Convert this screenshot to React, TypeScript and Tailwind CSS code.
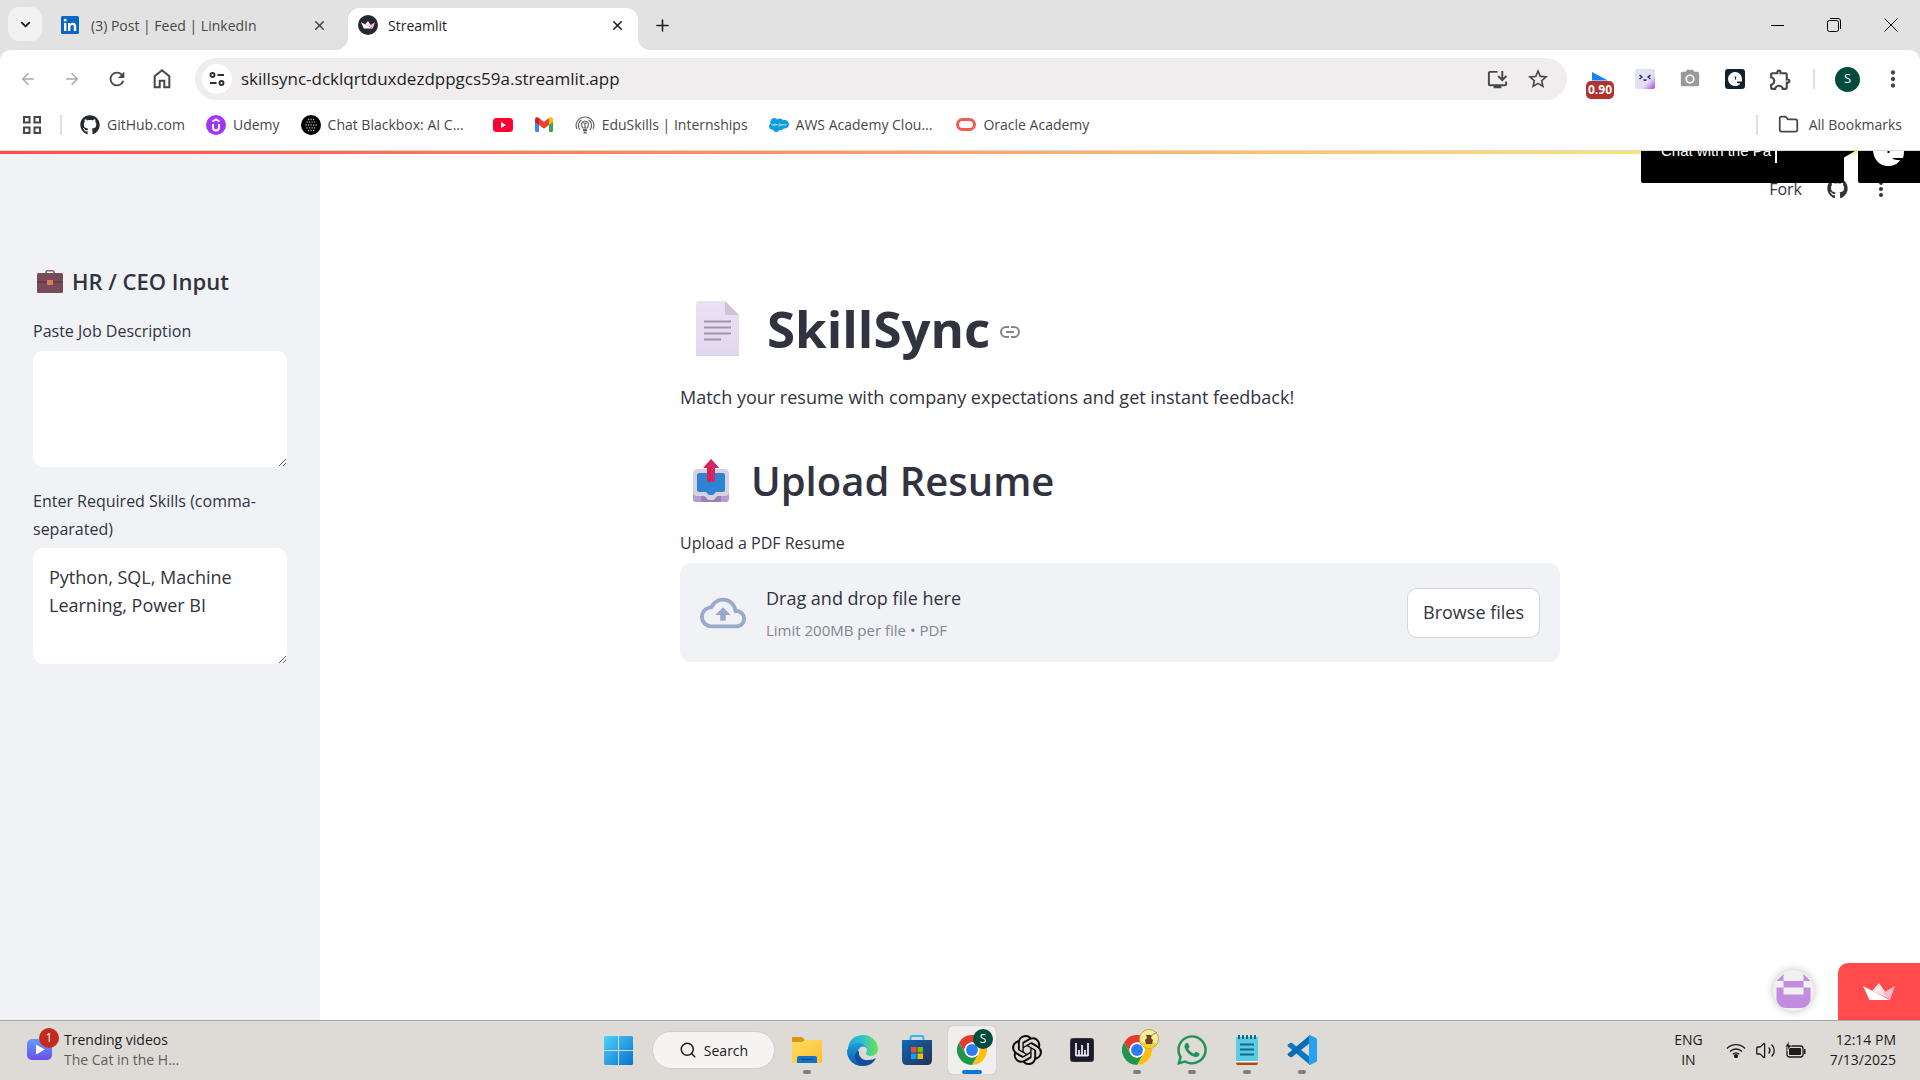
import type { ReactNode } from "react";
import { FaGithub, FaWhatsapp, FaSalesforce } from "react-icons/fa";
import { MdOutlineInstallDesktop, MdOutlineExtension, MdOutlineCloudUpload, MdRefresh, MdStarBorder, MdMoreVert, MdCameraAlt } from "react-icons/md";
import { ArrowLeft, ArrowRight, Plus, X, ChevronDown, Folder, Search, Volume2 } from "lucide-react";

function Crown({ className }: { className: string }) {
  return (
    <svg viewBox="0 0 32 17" className={className}>
      <path d="M0 3 27 17H6.500Z" fill="#fff" />
      <path d="M16 0 27 16 9 8Z" fill="#ffe0e6" />
      <path d="M32 3 27 17 20 10Z" fill="#ffb8c6" />
    </svg>
  );
}

function ChromeLogo({ className }: { className: string }) {
  return (
    <svg viewBox="0 0 48 48" className={className}>
      <circle cx="24" cy="24" r="24" fill="#fff" />
      <path d="M24 12h20.800A24 24 0 0 0 3.200 12l10.400 18A12 12 0 0 1 24 12Z" fill="#e33b2e" />
      <path d="M34.400 30 24 48A24 24 0 0 0 44.800 12H24a12 12 0 0 1 10.400 18Z" fill="#fdc00f" />
      <path d="M13.600 30 3.200 12A24 24 0 0 0 24 48l10.400-18a12 12 0 0 1-20.800 0Z" fill="#21964a" />
      <circle cx="24" cy="24" r="12" fill="#fff" />
      <circle cx="24" cy="24" r="9.500" fill="#2f7bf2" />
    </svg>
  );
}

function OpenAiLogo() {
  return (
    <svg viewBox="0 0 24 24" className="size-[30px]" fill="#0c0c0c">
      <path d="M22.2819 9.8211a5.9847 5.9847 0 0 0-.5157-4.9108 6.0462 6.0462 0 0 0-6.5098-2.9A6.0651 6.0651 0 0 0 4.9807 4.1818a5.9847 5.9847 0 0 0-3.9977 2.9 6.0462 6.0462 0 0 0 .7427 7.0966 5.98 5.98 0 0 0 .511 4.9107 6.051 6.051 0 0 0 6.5146 2.9001A5.9847 5.9847 0 0 0 13.2599 24a6.0557 6.0557 0 0 0 5.7718-4.2058 5.9894 5.9894 0 0 0 3.9977-2.9001 6.0557 6.0557 0 0 0-.7475-7.073zm-9.022 12.6081a4.4755 4.4755 0 0 1-2.8764-1.0408l.1419-.0804 4.7783-2.7582a.7948.7948 0 0 0 .3927-.6813v-6.7369l2.02 1.1686a.071.071 0 0 1 .038.052v5.5826a4.504 4.504 0 0 1-4.4945 4.4944zm-9.6607-4.1254a4.4708 4.4708 0 0 1-.5346-3.0137l.142.0852 4.783 2.7582a.7712.7712 0 0 0 .7806 0l5.8428-3.3685v2.3324a.0804.0804 0 0 1-.0332.0615L9.74 19.9502a4.4992 4.4992 0 0 1-6.1408-1.6464zM2.3408 7.8956a4.485 4.485 0 0 1 2.3655-1.9728V11.6a.7664.7664 0 0 0 .3879.6765l5.8144 3.3543-2.0201 1.1685a.0757.0757 0 0 1-.071 0l-4.8303-2.7865A4.504 4.504 0 0 1 2.3408 7.872zm16.5963 3.8558L13.1038 8.364 15.1192 7.2a.0757.0757 0 0 1 .071 0l4.8303 2.7913a4.4944 4.4944 0 0 1-.6765 8.1042v-5.6772a.79.79 0 0 0-.407-.667zm2.0107-3.0231l-.142-.0852-4.7735-2.7818a.7759.7759 0 0 0-.7854 0L9.409 9.2297V6.8974a.0662.0662 0 0 1 .0284-.0615l4.8303-2.7866a4.4992 4.4992 0 0 1 6.6802 4.66zM8.3065 12.863l-2.02-1.1638a.0804.0804 0 0 1-.038-.0567V6.0742a4.4992 4.4992 0 0 1 7.3757-3.4537l-.142.0805L8.704 5.459a.7948.7948 0 0 0-.3927.6813zm1.0976-2.3654l2.602-1.4998 2.6069 1.4998v2.9994l-2.5974 1.4997-2.6067-1.4997Z" />
    </svg>
  );
}

function TabStrip() {
  return (
    <header className="flex h-[50px] items-end bg-[#e2e2e2] text-[#1f1f1f]">
      <button aria-label="Search tabs" className="mb-[9px] ml-2 flex size-[34px] items-center justify-center rounded-[11px] bg-[#f2f2f2]">
        <ChevronDown className="size-[15px]" strokeWidth={3} />
      </button>
      <div className="flex h-[42px] w-[306px] items-center pb-2 pl-[19px] pr-[21px] text-[#474747]">
        <svg viewBox="0 0 18 18" className="size-[18px]">
          <rect width="18" height="18" rx="1.500" fill="#0a66c2" />
          <path d="M3 7h2.400v8H3zM7 7h2.300v1.200C9.800 7.300 10.700 6.800 12 6.800c2.300 0 3.200 1.400 3.200 3.800V15h-2.400v-3.900c0-1.300-.300-2.200-1.500-2.200-1.300 0-1.900.900-1.900 2.200V15H7z" fill="#fff" />
          <circle cx="4.200" cy="4.200" r="1.400" fill="#fff" />
        </svg>
        <span className="ml-3 flex-1 whitespace-nowrap text-[14px]">(3) Post | Feed | LinkedIn</span>
        <button aria-label="Close LinkedIn tab"><X className="size-[15px]" strokeWidth={2.5} /></button>
      </div>
      <div className="relative flex h-[42px] w-[290px] items-center rounded-t-xl bg-white pb-2 pl-[10px] pr-[13px]">
        <span className="absolute -left-3 bottom-0 size-3 bg-[radial-gradient(circle_at_0_0,transparent_12px,white_12px)]" />
        <span className="absolute -right-3 bottom-0 size-3 bg-[radial-gradient(circle_at_100%_0,transparent_12px,white_12px)]" />
        <span className="flex size-5 items-center justify-center rounded-full bg-[#262730]">
          <Crown className="w-[14px]" />
        </span>
        <span className="ml-[10px] flex-1 text-[14px]">Streamlit</span>
        <button aria-label="Close Streamlit tab"><X className="size-[15px]" strokeWidth={2.5} /></button>
      </div>
      <button aria-label="New tab" className="mb-[15px] ml-[15px]"><Plus className="size-[19px]" strokeWidth={2} /></button>
      <div className="ml-auto flex h-full items-center pr-[22px]">
        <button aria-label="Minimize" className="h-px w-[13px] bg-black" />
        <button aria-label="Restore" className="ml-[43px]">
          <svg viewBox="0 0 14 14" className="size-[14px]" fill="none" stroke="#000">
            <rect x=".5" y="2.500" width="11" height="11" rx="2" />
            <path d="M3 .5h8a2.500 2.500 0 0 1 2.500 2.500v8" />
          </svg>
        </button>
        <button aria-label="Close window" className="ml-[43px]">
          <svg viewBox="0 0 14 14" className="size-[14px]" stroke="#000"><path d="m.5.5 13 13m0-13-13 13" /></svg>
        </button>
      </div>
    </header>
  );
}

function Toolbar() {
  return (
    <div className="bg-[#e2e2e2]">
      <div className="flex h-[58px] items-center rounded-t-[10px] bg-white pl-[19px] pr-[14px] text-[#474747]">
        <button aria-label="Back" className="text-[#a9a9a9]"><ArrowLeft className="size-[18px]" /></button>
        <button aria-label="Forward" className="ml-[26px] text-[#a9a9a9]"><ArrowRight className="size-[18px]" /></button>
        <button aria-label="Reload" className="ml-[25px]"><MdRefresh className="size-[22px]" /></button>
        <button aria-label="Home" className="ml-[23px]">
          <svg viewBox="0 0 24 24" className="size-[22px]" fill="none" stroke="currentColor" strokeWidth="2.200"><path d="M4 21V9l8-6.500L20 9v12h-5.500v-7h-5v7z" /></svg>
        </button>
        <div className="ml-[22px] flex h-[42px] flex-1 items-center rounded-full bg-[#efedee] pl-[7px] pr-[17px]">
          <button aria-label="Site information" className="flex size-[30px] items-center justify-center rounded-full bg-white">
            <svg viewBox="0 0 16 16" className="size-[16px]" fill="none" stroke="#303030" strokeWidth="1.900">
              <circle cx="3.500" cy="4" r="2" /><path d="M8.500 4H15M1 12h6.500" /><circle cx="12.500" cy="12" r="2" />
            </svg>
          </button>
          <input aria-label="Address" defaultValue="skillsync-dcklqrtduxdezdppgcs59a.streamlit.app" className="ml-[9px] flex-1 bg-transparent text-[17px] text-[#1f1f1f] outline-none" />
          <button aria-label="Install app"><MdOutlineInstallDesktop className="size-[23px]" /></button>
          <button aria-label="Bookmark this tab" className="ml-[17px]"><MdStarBorder className="size-[24px]" /></button>
        </div>
        <button aria-label="Speed extension" className="ml-[19px] flex flex-col items-center pt-[12px]">
          <svg viewBox="0 0 18 9" className="h-[9px] w-[18px]"><path d="M1 0 17 8.500H1z" fill="#0a84ff" /></svg>
          <span className="flex h-[18px] w-[28px] items-center justify-center rounded-[5px] bg-[#b3302f] text-[12px] font-bold text-white">0.90</span>
        </button>
        <button aria-label="Kawaii extension" className="ml-[21px] flex size-[20px] items-center justify-center rounded-[2px] bg-[linear-gradient(135deg,#dfe6f5_0%,#e5dcf5_65%,#a246dd_100%)]">
          <svg viewBox="0 0 20 20" className="size-[20px]" fill="none" stroke="#241b45" strokeWidth="1.300"><path d="m4.500 6 2.500 2-2.500 2M15.500 6 13 8l2.500 2M8.500 10.500q1.500 1.500 3 0" /></svg>
        </button>
        <button aria-label="Screenshot extension" className="ml-[24px] text-[#9a9a9a]"><MdCameraAlt className="size-[22px]" /></button>
        <button aria-label="Chat extension" className="ml-[24px] flex size-[20px] items-center justify-center rounded-[3px] bg-[#10222e]">
          <svg viewBox="0 0 20 20" className="size-[20px]"><path d="M10 3a7 7 0 1 0 5.500 11.400L12 14v-1.500h5V10a7 7 0 0 0-7-7Z" fill="#fff" /><path d="M10.500 7.500v3" stroke="#10222e" strokeWidth="1.300" /></svg>
        </button>
        <button aria-label="Extensions" className="ml-[23px]"><MdOutlineExtension className="size-[25px]" /></button>
        <span className="ml-[20px] h-[20px] w-[2px] bg-[#e0dfe0]" />
        <button aria-label="Profile" className="ml-[20px] flex size-[25px] items-center justify-center rounded-full bg-[#004d40] text-[13px] text-white">S</button>
        <button aria-label="Browser menu" className="ml-[20px]"><MdMoreVert className="size-[26px]" /></button>
      </div>
    </div>
  );
}

function Bookmark({ label, name, children }: { label?: string; name: string; children: ReactNode }) {
  return (
    <a href="#" aria-label={name} className="flex items-center gap-[7px] whitespace-nowrap">
      <span className="flex size-5 items-center justify-center">{children}</span>
      {label}
    </a>
  );
}

function BookmarksBar() {
  return (
    <nav className="flex h-[43px] items-center border-b border-[#d9d9d9] bg-white pb-[9px] pl-[23px] pr-[18px] text-[14px] text-[#474747]">
      <button aria-label="Apps">
        <svg viewBox="0 0 18 18" className="size-[18px]" fill="none" stroke="#474747" strokeWidth="2"><path d="M1 1h5.500v5.500H1zM11.500 1H17v5.500h-5.500zM1 11.500h5.500V17H1zM11.500 11.500H17V17h-5.500z" /></svg>
      </button>
      <span className="ml-[19px] mr-[18px] h-[20px] w-[2px] bg-[#e0dfe0]" />
      <div className="flex items-center gap-[21px]">
        <Bookmark name="GitHub" label="GitHub.com"><FaGithub className="size-5 text-[#24292f]" /></Bookmark>
        <Bookmark name="Udemy" label="Udemy">
          <svg viewBox="0 0 20 20" className="size-5" fill="none" stroke="#fff" strokeWidth="2"><circle cx="10" cy="10" r="10" fill="#a435f0" stroke="none" /><path d="m6.500 6.500 3.500-2 3.500 2M7 9v3.500a3 3 0 0 0 6 0V9" /></svg>
        </Bookmark>
        <Bookmark name="Blackbox" label="Chat Blackbox: AI C...">
          <svg viewBox="0 0 20 20" className="size-5"><circle cx="10" cy="10" r="10" fill="#000" /><path d="M7 4.500h7M5.500 7.200h9.500M4.500 10h11.500M5.500 12.800h9.500M7 15.500h7" stroke="#bbb" strokeWidth="1.300" strokeDasharray="1.200 1.300" /></svg>
        </Bookmark>
        <span className="ml-[8px]"><Bookmark name="YouTube">
          <svg viewBox="0 0 20 14" className="h-[14px] w-5"><rect width="20" height="14" rx="3.500" fill="#f03" /><path d="M8 4v6l5-3z" fill="#fff" /></svg>
        </Bookmark></span>
        <Bookmark name="Gmail">
          <svg viewBox="0 0 20 15" className="h-[15px] w-5">
            <path d="M1 3v10.500c0 .8.500 1.500 1.400 1.500H5V6z" fill="#4285f4" />
            <path d="M19 3v10.500c0 .8-.500 1.500-1.400 1.500H15V6z" fill="#34a853" />
            <path d="M15 2.500V8l4-3V2.500C19 .5 16.800-.3 15 1z" fill="#fbbc04" />
            <path d="M1 2.500V5l4 3V2.500L5 1C3.200-.3 1 .5 1 2.500Z" fill="#c5221f" />
            <path d="M5 8V1l5 3.800L15 1v7l-5 3.800z" fill="#ea4335" />
          </svg>
        </Bookmark>
        <Bookmark name="EduSkills" label="EduSkills | Internships">
          <svg viewBox="0 0 20 20" className="size-5" fill="none" stroke="#666" strokeWidth="1.200"><path d="M2 14C-1 8 4 2 10 2s11 6 8 12M5 15c-3-4-1-9 1.500-10M15 15c3-4 1-9-1.500-10M8 13c-3-3-1-7 2-7s5 4 2 7zM8 8h4M10 8v5" /><path d="M8 15h4M8.500 17.500h3" strokeWidth="2" /></svg>
        </Bookmark>
        <Bookmark name="AWS Academy" label="AWS Academy Clou..."><FaSalesforce className="size-5 text-[#0d9ddb]" /></Bookmark>
        <span className="ml-[3px]"><Bookmark name="Oracle Academy" label="Oracle Academy">
          <span className="h-[13px] w-5 rounded-full border-[3px] border-[#ee5d4a]" />
        </Bookmark></span>
      </div>
      <span className="ml-auto mr-[20px] h-[20px] w-[2px] bg-[#e0dfe0]" />
      <a href="#" className="flex items-center gap-[10px]"><Folder className="size-[21px]" strokeWidth={2} />All Bookmarks</a>
    </nav>
  );
}

function Sidebar() {
  return (
    <aside className="w-[320px] shrink-0 bg-[#f0f2f6] px-[33px] pt-[114px]">
      <h2 className="flex items-center text-[22px] font-semibold leading-[32px]">
        <svg viewBox="0 0 26 24" className="mr-[9px] ml-[4px] h-[24px] w-[26px] shrink-0">
          <path d="M9 5V3.500C9 2.500 9.800 1.800 11 1.800h4c1.200 0 2 .7 2 1.700V5" fill="none" stroke="#8c6068" strokeWidth="1.600" />
          <rect y="4" width="26" height="20" rx="1.500" fill="#794a58" />
          <path d="M0 13h26" stroke="#5d3350" strokeWidth="1.200" />
          <rect x="10" y="11" width="6" height="5" fill="#d67d55" />
        </svg>
        HR / CEO Input
      </h2>
      <label htmlFor="job" className="mt-[20px] block text-[16px] leading-[28px]">Paste Job Description</label>
      <textarea id="job" className="mt-[6px] block h-[116px] w-full rounded-[10px] bg-white px-4 py-[15px] text-[18px] leading-[28px] outline-none" />
      <label htmlFor="skills" className="mt-[20px] block text-[16px] leading-[28px]">Enter Required Skills (comma-separated)</label>
      <textarea id="skills" defaultValue="Python, SQL, Machine Learning, Power BI" className="mt-[5px] block h-[116px] w-full rounded-[10px] bg-white px-4 py-[15px] text-[18px] leading-[28px] outline-none" />
    </aside>
  );
}

function ChatOverlay() {
  return (
    <div className="absolute right-0 top-0 z-20 flex h-[32px] items-start">
      <div className="relative h-[32px] w-[203px] overflow-hidden rounded-b-[2px] bg-black">
        <span className="absolute -top-[11px] left-[20px] flex items-center whitespace-nowrap font-['Liberation_Sans'] text-[15px] leading-[22px] text-white">Chat with the Pa</span>
        <span className="absolute left-[134px] top-0 h-[12px] w-[2px] bg-white" />
      </div>
      <svg viewBox="0 0 14 7" className="h-[7px] w-[14px]"><path d="M0 0h11L0 6.500z" fill="#000" /></svg>
      <div className="h-[32px] w-[62px] overflow-hidden rounded-bl-[2px] bg-black">
        <svg viewBox="0 0 62 32" className="h-[32px] w-[62px]">
          <path d="M15 0c1 9 7 15 15 15 5 0 10-2 12-6-3 0-6 0-8-2h11q1-3 1-7z" fill="#fff" />
          <path d="M30.500 0v2" stroke="#000" strokeWidth="2" />
        </svg>
      </div>
    </div>
  );
}

function DocumentEmoji() {
  return (
    <svg viewBox="0 0 43 55" className="ml-[16px] mr-[28px] h-[55px] w-[43px]">
      <defs>
        <linearGradient id="paper" x1="0" y1="0" x2="0" y2="1"><stop stopColor="#eae1f3" /><stop offset="1" stopColor="#e2d8ee" /></linearGradient>
      </defs>
      <path d="M2 0h27l14 14v39c0 1-1 2-2 2H2c-1 0-2-1-2-2V2C0 1 1 0 2 0Z" fill="url(#paper)" />
      <path d="M29 0v12c0 1 1 2 2 2h12z" fill="#cdc4d4" />
      <path d="M0 53c0 1 1 2 2 2h39c1 0 2-1 2-2" fill="none" stroke="#cdbfe0" />
      <path d="M8 20.500h27M8 26.500h27M8 32.500h27M8 38.500h17" stroke="#9e95a9" strokeWidth="2" />
    </svg>
  );
}

function OutboxEmoji() {
  return (
    <svg viewBox="0 0 36 44" className="ml-[13px] mr-[22px] h-[44px] w-[36px]">
      <path d="M0 24h36v16c0 2-1 3-3 3H3c-2 0-3-1-3-3z" fill="#b79bd0" />
      <path d="M8 36h20v7H8z" fill="#9a7fb8" />
      <path d="M4 10h28c2 0 4 2 4 4v19c0 3-2 4-4 4h-7c-2 0-3 4-5 4h-4c-2 0-3-4-5-4H4c-2 0-4-1-4-4V14c0-2 2-4 4-4Z" fill="#d8d2e0" />
      <path d="M6 14h24c1 0 2 1 2 2v15c0 1-1 2-2 2h-7l-3 3h-4l-3-3H6c-1 0-2-1-2-2V16c0-1 1-2 2-2Z" fill="#2f83d3" />
      <path d="m18 0 8 9h-4v12c0 1-1 2-2 2h-4c-1 0-2-1-2-2V9h-4z" fill="#d6244f" />
      <path d="m18 0 8 9h-4v12c0 1-1 2-2 2h-2z" fill="#c92a72" />
    </svg>
  );
}

function AppPage() {
  return (
    <div className="flex flex-1 text-[#31333f]">
      <Sidebar />
      <main className="relative flex flex-1 flex-col bg-white">
        <div className="flex h-[75px] items-center justify-end pr-[27px] text-[16px]">
          <button>Fork</button>
          <a href="#" aria-label="Source repository" className="ml-[25px]"><FaGithub className="size-[21px]" /></a>
          <button aria-label="App menu" className="ml-[21px]"><MdMoreVert className="size-[24px]" /></button>
        </div>
        <div className="mx-auto w-full max-w-[880px] pt-[69px]">
          <h1 className="flex h-[66px] items-center text-[51px] font-bold leading-[66px]">
            <DocumentEmoji />
            SkillSync
            <a href="#" aria-label="Link to heading" className="ml-[10px] mt-[8px] text-[#83858c]">
              <svg viewBox="0 0 20 12" className="h-[12px] w-[20px]" fill="none" stroke="currentColor" strokeWidth="2"><path d="M9 1H6a5 5 0 0 0 0 10h3M11 1h3a5 5 0 0 1 0 10h-3M6 6h8" /></svg>
            </a>
          </h1>
          <p className="mt-[20px] text-[18px] leading-[32px]">Match your resume with company expectations and get instant feedback!</p>
          <h2 className="mt-[41px] flex h-[54px] items-center text-[40px] font-semibold leading-[54px]"><OutboxEmoji />Upload Resume</h2>
          <label htmlFor="resume" className="mt-[21px] block text-[16px] leading-[28px]">Upload a PDF Resume</label>
          <section className="mt-[6px] flex h-[99px] items-center rounded-[10px] bg-[#f0f2f6] px-5">
            <MdOutlineCloudUpload className="size-[46px] text-[#9aa8c9]" />
            <div className="ml-[20px] pt-[2px]">
              <div className="text-[18px] leading-[32px]">Drag and drop file here</div>
              <div className="text-[15px] leading-[32px] text-[#83868f]">Limit 200MB per file • PDF</div>
            </div>
            <button id="resume" className="ml-auto h-[50px] rounded-[10px] border border-[#d6d6d9] bg-white px-[15px] text-[18px]">Browse files</button>
          </section>
        </div>
        <ChatOverlay />
        <div className="absolute bottom-0 right-0 flex items-end">
          <a href="#" aria-label="Author profile" className="mb-[9px] mr-[24px] size-[41px] overflow-hidden rounded-full bg-[#f0f0f0] shadow-[0_0_8px_rgba(0,0,0,0.25)]">
            <svg viewBox="0 0 41 41" className="size-[41px]" fill="#c38ddf">
              <path d="M3.500 11 10.500 4v7zM30.500 4l7 7h-7zM10.500 11h20v6.500h-20zM3.500 17.500h7v7h20v-7h7V30q-2 8-10 8h-14q-8 0-10-8z" />
            </svg>
          </a>
          <a href="#" aria-label="Streamlit" className="flex h-[57px] w-[82px] items-center justify-center rounded-tl-[10px] bg-[#ff4b4b]"><Crown className="w-[32px]" /></a>
        </div>
      </main>
    </div>
  );
}

function TaskButton({ name, running, active, children }: { name: string; running?: boolean; active?: boolean; children: ReactNode }) {
  return (
    <button aria-label={name} className={active ? "relative flex size-[48px] items-center justify-center rounded-[5px] bg-[#f1efee] shadow-[0_0_1px_#999]" : "relative flex size-[48px] items-center justify-center"}>
      {children}
      {running && <span className="absolute bottom-0 left-[20px] h-[4px] w-[8px] rounded-full bg-[#807e7c]" />}
      {active && <span className="absolute bottom-0 left-[14px] h-[4px] w-[20px] rounded-full bg-[#0a78d4]" />}
    </button>
  );
}

function Taskbar() {
  return (
    <footer className="grid h-[60px] grid-cols-[1fr_auto_1fr] items-center border-t border-[#aaa8a6] bg-[#dedbd7] pb-px text-[#1b1b1b]">
      <button className="flex items-center pl-[27px] text-left text-[14px] leading-[20px]">
        <span className="relative mb-[11px] mr-[11px] h-[30px] w-[26px]">
          <svg viewBox="0 0 25 21" className="absolute bottom-0 left-0 h-[21px] w-[25px]">
            <defs><linearGradient id="video" x1="0" y1="0" x2="0" y2="1"><stop stopColor="#629bff" /><stop offset="1" stopColor="#6a50e8" /></linearGradient></defs>
            <rect width="25" height="21" rx="5" fill="url(#video)" />
            <path d="M9 5.500v10l9-5z" fill="#fff" />
          </svg>
          <span className="absolute -top-[2px] left-[12px] flex size-[20px] items-center justify-center rounded-full bg-[#c42b1c] text-[12px] text-white">1</span>
        </span>
        <span><span className="block">Trending videos</span><span className="block text-[#5f5d5b]">The Cat in the H...</span></span>
      </button>
      <div className="flex items-center gap-[7px] pl-[10px]">
        <button aria-label="Start" className="mr-[12px]">
          <svg viewBox="0 0 29 29" className="size-[29px]">
            <defs><linearGradient id="start" x1="0" y1="0" x2="1" y2="1"><stop stopColor="#4fd0fb" /><stop offset="1" stopColor="#0573cf" /></linearGradient></defs>
            <path d="M1 0h13v14H0V1zM15 0h13l1 1v13H15zM0 15h14v14H1l-1-1zM15 15h14v13l-1 1H15z" fill="url(#start)" />
          </svg>
        </button>
        <button className="mr-[1px] flex h-[38px] w-[123px] items-center justify-center gap-[7px] rounded-full border border-[#d2cfcc] bg-[#f5f4f3] text-[14px]"><Search className="size-[18px]" />Search</button>
        <TaskButton name="File Explorer" running>
          <svg viewBox="0 0 30 28" className="h-[28px] w-[30px]">
            <defs><linearGradient id="folder" x1="0" y1="0" x2="1" y2="1"><stop stopColor="#ffdc68" /><stop offset="1" stopColor="#fbc02d" /></linearGradient></defs>
            <path d="M0 2q0-1 1-1h9l3 3v5H0z" fill="#d9970a" />
            <path d="M0 6h10l3-2h16q1 0 1 1v22H1q-1 0-1-1z" fill="url(#folder)" />
            <path d="M5 27v-5q0-2 2-2h16q2 0 2 2v5z" fill="#1272c4" /><path d="M9 23.500h12" stroke="#0a4b8c" />
          </svg>
        </TaskButton>
        <TaskButton name="Edge">
          <svg viewBox="0 0 31 31" className="size-[31px]">
            <defs>
              <linearGradient id="edgeTop" x1="0" y1="0" x2="1" y2="0"><stop stopColor="#20a4dc" /><stop offset=".5" stopColor="#31c5c9" /><stop offset="1" stopColor="#6be04b" /></linearGradient>
              <linearGradient id="edgeLow" x1="0" y1="0" x2="0" y2="1"><stop stopColor="#1b9de2" /><stop offset="1" stopColor="#0c59a4" /></linearGradient>
            </defs>
            <path d="M1 13C2 5 8 0 16 0c9 0 15 7 15 14 0 4-3 7-7 7-3 0-5-1-5-2.500 0-1 1-1.500 1-3.500 0-3-3-5-7-5-6 0-10 2-12 5z" fill="url(#edgeTop)" />
            <path d="M0 16C1 11 6 8 11 8c6 0 9 4 9 7 0-2-2-3.500-4-3.500-3 0-5 3-5 6 0 7 6 11 12 10.500-2 2-5 3-8 3C6 31 0 24 0 16Z" fill="url(#edgeLow)" />
            <path d="M12 16c-1 6 4 10 10 9 3 0 5-1 7-2-2 5-7 8-13 8-5-1-8-5-8-10 0-3 2-5 4-5Z" fill="#10509b" />
          </svg>
        </TaskButton>
        <TaskButton name="Microsoft Store">
          <svg viewBox="0 0 30 30" className="size-[30px]">
            <defs><linearGradient id="store" x1="0" y1="0" x2="1" y2="1"><stop stopColor="#1068b8" /><stop offset="1" stopColor="#243054" /></linearGradient></defs>
            <path d="M8.500 6V3q0-2 2-2h9q2 0 2 2v3" fill="none" stroke="#2bbcf0" strokeWidth="2" />
            <path d="M0 5h30v20q0 5-5 5H5q-5 0-5-5z" fill="url(#store)" />
            <path d="M9 12h5.500v5.500H9z" fill="#f25022" /><path d="M15.500 12H21v5.500h-5.500z" fill="#7fba00" /><path d="M9 18.500h5.500V24H9z" fill="#00a4ef" /><path d="M15.500 18.500H21V24h-5.500z" fill="#ffb900" />
          </svg>
        </TaskButton>
        <TaskButton name="Chrome" active>
          <ChromeLogo className="size-[30px]" />
          <span className="absolute right-[3px] top-[3px] flex size-[20px] items-center justify-center rounded-full bg-[#004d40] text-[12px] text-white">S</span>
        </TaskButton>
        <TaskButton name="ChatGPT"><OpenAiLogo /></TaskButton>
        <TaskButton name="Audio app">
          <svg viewBox="0 0 24 24" className="size-[24px]"><rect width="24" height="24" rx="4" fill="#1d1a29" stroke="#4b4858" /><path d="M6 5v13M9 12v6M12 7v11M15 12v6M18 5v13M6 17.500h12" stroke="#e8e5ee" strokeWidth="1.800" fill="none" /></svg>
        </TaskButton>
        <TaskButton name="Chrome, second profile" running>
          <ChromeLogo className="size-[30px]" />
          <svg viewBox="0 0 20 20" className="absolute right-[2px] top-[3px] size-[20px]"><circle cx="10" cy="10" r="9.500" fill="#f8ee9a" stroke="#b7a64c" /><path d="M2 14q8-2 16 0-3 5-8 5t-8-5Z" fill="#f5cf2e" /><path d="M7 6h6l-1 3 2 2-1 4H7l-1-4 2-2z" fill="#70401f" /><path d="m12 7 6-4" stroke="#a78443" /></svg>
        </TaskButton>
        <TaskButton name="WhatsApp" running><FaWhatsapp className="size-[34px] text-[#1e9458]" /></TaskButton>
        <TaskButton name="Notepad" running>
          <svg viewBox="0 0 24 30" className="h-[30px] w-[24px]">
            <path d="M1 26h22v2q0 2-2 2H3q-2 0-2-2z" fill="#a94b0e" /><path d="M1 26h22v1.500H1z" fill="#fff" />
            <rect x="1" y="2" width="22" height="24" rx="1" fill="#59cbe3" />
            <path d="M4 0v4M8 0v4M12 0v4M16 0v4M20 0v4" stroke="#146a8a" strokeWidth="2" /><path d="M5 9.500h14M5 14.500h14M5 19.500h14" stroke="#146a8a" strokeWidth="2" />
          </svg>
        </TaskButton>
        <TaskButton name="Visual Studio Code" running>
          <svg viewBox="0 0 30 30" className="size-[30px]">
            <path d="M1 9.500 3 8q1-.5 2 0l18 14v8L1 11.500q-1-1 0-2Z" fill="#0b78c3" />
            <path d="M1 20.500 3 22q1 .5 2 0L23 8V0L1 18.500q-1 1 0 2Z" fill="#0b6cb4" />
            <path d="M22 0q.5 0 1 0l6 3q1 .5 1 1.500v21q0 1-1 1.500l-6 3q-1 0-1 0z" fill="#26a2f0" />
          </svg>
        </TaskButton>
      </div>
      <div className="flex items-center justify-end pr-[24px] text-[14px] leading-[20px]">
        <button className="text-center">ENG<br />IN</button>
        <button aria-label="Network, sound and battery" className="ml-[23px] flex items-center gap-[9px]">
          <svg viewBox="0 0 20 16" className="h-[16px] w-[20px]" fill="none" stroke="#1b1b1b" strokeWidth="1.400"><path d="M1 6.500a12.500 12.500 0 0 1 18 0M4 9.500a8.500 8.500 0 0 1 12 0M6.800 12.200a4.500 4.500 0 0 1 6.400 0" /><circle cx="10" cy="14" r="1.400" fill="#1b1b1b" /></svg>
          <Volume2 className="size-[21px]" strokeWidth={1.5} />
          <svg viewBox="0 0 21 18" className="h-[18px] w-[21px]"><rect x="2" y="5" width="16" height="11" rx="2.500" fill="none" stroke="#1b1b1b" strokeWidth="1.300" /><rect x="4" y="7" width="12" height="7" rx="1" fill="#1b1b1b" /><path d="M19 8h1.500v5H19z" fill="#1b1b1b" /><path d="M4 0 0 6h3l-1 4 5-6H4z" fill="#1b1b1b" stroke="#dedbd7" strokeWidth=".6" /></svg>
        </button>
        <button className="ml-[24px] text-right">12:14 PM<br />7/13/2025</button>
      </div>
    </footer>
  );
}

export default function App() {
  return (
    <div className="flex min-h-screen flex-col bg-white font-['Open_Sans','Noto_Sans',sans-serif]">
      <TabStrip />
      <Toolbar />
      <BookmarksBar />
      <div className="relative flex flex-1 flex-col">
        <div className="absolute inset-x-0 top-0 z-10 h-[3px] bg-[linear-gradient(90deg,#ff4b4b,#fffd80)]" />
        <AppPage />
      </div>
      <Taskbar />
    </div>
  );
}
